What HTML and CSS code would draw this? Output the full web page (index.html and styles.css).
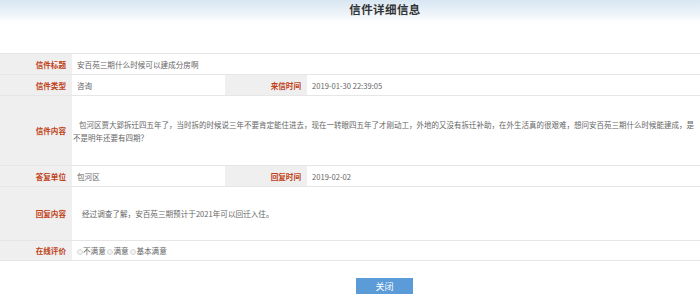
FILE: index.html
```html
<!DOCTYPE html>
<html lang="zh-CN">
<head>
    <meta charset="UTF-8">
    <title>信件详细信息</title>
    <link rel="stylesheet" href="styles.css">
</head>
<body>
    <div class="page-header">
        <h1 class="page-title">信件详细信息</h1>
    </div>

    <table class="detail-table">
        <colgroup>
            <col class="col-label">
            <col class="col-value">
            <col class="col-label2">
            <col>
        </colgroup>
        <tr class="row-short">
            <th>信件标题</th>
            <td colspan="3">安百苑三期什么时候可以建成分房啊</td>
        </tr>
        <tr class="row-short">
            <th>信件类型</th>
            <td>咨询</td>
            <th>来信时间</th>
            <td>2019-01-30 22:39:05</td>
        </tr>
        <tr class="row-content">
            <th>信件内容</th>
            <td colspan="3" class="content-cell">包河区贾大郢拆迁四五年了，当时拆的时候说三年不要肯定能住进去，现在一转眼四五年了才刚动工，外地的又没有拆迁补助，在外生活真的很艰难，想问安百苑三期什么时候能建成，是不是明年还要有四期？</td>
        </tr>
        <tr class="row-short">
            <th>答复单位</th>
            <td>包河区</td>
            <th>回复时间</th>
            <td>2019-02-02</td>
        </tr>
        <tr class="row-reply">
            <th>回复内容</th>
            <td colspan="3" class="reply-cell">经过调查了解，安百苑三期预计于2021年可以回迁入住。</td>
        </tr>
        <tr class="row-rate">
            <th>在线评价</th>
            <td colspan="3">
                <span class="radio"></span>不满意
                <span class="radio"></span>满意
                <span class="radio"></span>基本满意
            </td>
        </tr>
    </table>

    <div class="actions">
        <button class="close-button">关闭</button>
    </div>
</body>
</html>
```

FILE: styles.css
```css
* {
    margin: 0;
    padding: 0;
    box-sizing: border-box;
}

body {
    font-family: "Noto Sans CJK SC", "Liberation Sans", sans-serif;
    background-color: #fff;
    color: #666;
    width: 700px;
    height: 299px;
    overflow: hidden;
}

/* Title band */
.page-header {
    height: 22px;
    background: linear-gradient(to bottom, #d8e6f2, #f4f8fb 80%, #fff);
    margin-bottom: 31px;
}

.page-title {
    font-size: 11.5px;
    font-weight: bold;
    color: #333;
    letter-spacing: 0.4px;
    line-height: 18px;
    text-align: center;
    padding-left: 70px;
}

/* Detail table */
.detail-table {
    width: 700px;
    border-collapse: collapse;
    table-layout: fixed;
    font-size: 7.6px;
}

.col-label {
    width: 72px;
}

.col-value {
    width: 153px;
}

.col-label2 {
    width: 82px;
}

.detail-table tr {
    border-top: 1px solid #e6e6e6;
    border-bottom: 1px solid #e6e6e6;
}

.detail-table th {
    background-color: #efefef;
    color: #bf4118;
    font-weight: bold;
    text-align: right;
    padding-right: 6px;
    white-space: nowrap;
}

.detail-table td {
    padding-left: 5px;
    color: #666;
    vertical-align: middle;
}

.row-short {
    height: 21px;
}

.row-content {
    height: 70px;
}

.row-reply {
    height: 54px;
}

.row-rate {
    height: 20px;
}

.content-cell {
    font-size: 7.5px;
    line-height: 13px;
    padding-left: 1px !important;
    padding-right: 0;
    text-indent: 6px;
}

.reply-cell {
    padding-left: 10px !important;
}

.radio {
    display: inline-block;
    width: 6px;
    height: 6px;
    border: 1px solid #d8d8d8;
    border-radius: 50%;
    background-color: #f4f4f4;
    vertical-align: -0.5px;
}

/* Close button */
.actions {
    padding-top: 17px;
    padding-left: 356px;
}

.close-button {
    display: block;
    width: 57px;
    height: 16px;
    background-color: #5b9bd8;
    color: #fff;
    border: none;
    font-family: "Noto Sans CJK SC", sans-serif;
    font-size: 9px;
    cursor: pointer;
}
```
